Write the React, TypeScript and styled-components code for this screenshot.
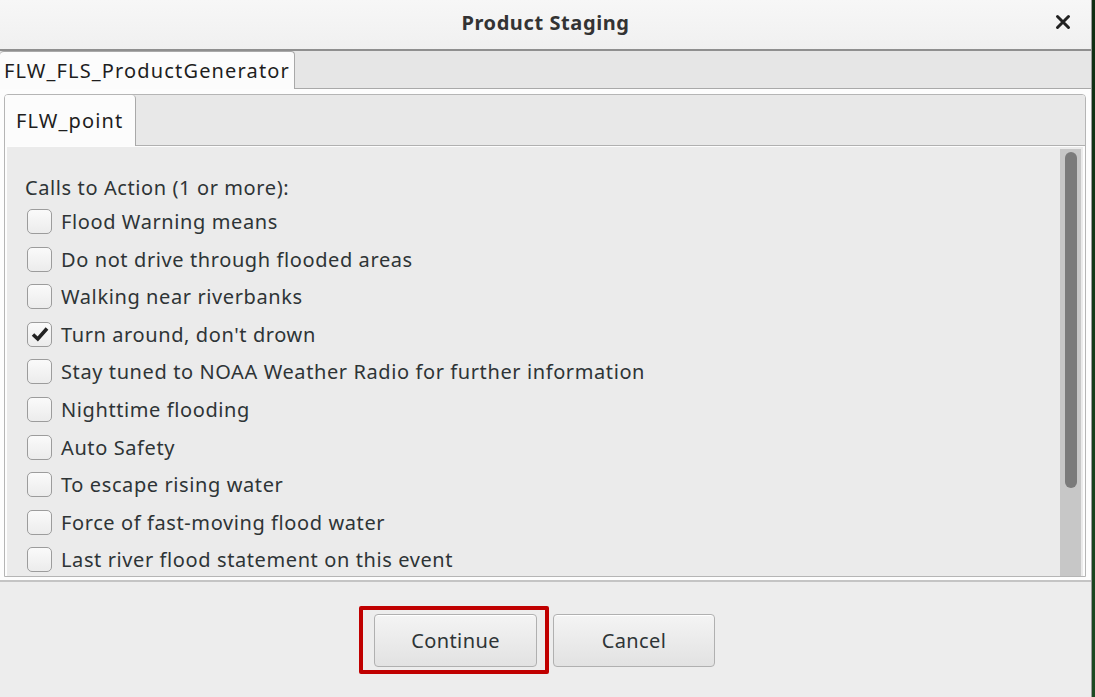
import React from "react";
import styled, { createGlobalStyle } from "styled-components";

const Global = createGlobalStyle`
  html, body { margin: 0; padding: 0; }
  body { width: 1095px; height: 697px; overflow: hidden; background: #17361a; }
  * { box-sizing: border-box; }
`;

const Page = styled.div`
  display: flex;
  width: 1095px;
  height: 697px;
  font-family: "Noto Sans", "Open Sans", sans-serif;
  color: #2e3436;
`;

const Window = styled.div`
  width: 1092px;
  height: 697px;
  display: flex;
  flex-direction: column;
  background: #ededed;
  border-right: 1px solid #9a9a9a;
`;

const Desktop = styled.div`
  flex: 1;
  background: linear-gradient(#0f2d12, #1d4a22);
`;

const TitleBar = styled.div`
  height: 51px;
  flex: none;
  display: flex;
  align-items: center;
  justify-content: center;
  position: relative;
  padding-bottom: 4px;
  background: linear-gradient(#f7f7f7, #f0f0f0);
  border-bottom: 2px solid #8f8f8f;
`;

const Title = styled.div`
  font-weight: 700;
  font-size: 20px;
  letter-spacing: 0.6px;
  color: #333;
  margin-left: 0;
`;

const Close = styled.div`
  position: absolute;
  right: 16px;
  top: 10px;
  width: 24px;
  height: 24px;
  display: flex;
  align-items: center;
  justify-content: center;
`;

const OuterTabs = styled.div`
  height: 38px;
  flex: none;
  display: flex;
  background: #e6e6e6;
  border-bottom: 1px solid #a9a9a9;
`;

const Tab = styled.div<{ $h: number; $w: number }>`
  width: ${(p) => p.$w}px;
  height: ${(p) => p.$h}px;
  background: #fcfcfc;
  border: 1px solid #a9a9a9;
  border-bottom: none;
  border-radius: 4px 4px 0 0;
  display: flex;
  align-items: center;
  font-size: 20px;
  letter-spacing: 1.15px;
  color: #1e1e1e;
  margin-bottom: -1px;
  position: relative;
  z-index: 1;
`;

const OuterTab = styled(Tab)`
  border-left: none;
  padding-left: 4px;
`;

const OuterPage = styled.div`
  flex: none;
  height: 493px;
  background: #fdfdfd;
  padding: 5px 5px 3px 4px;
  border-bottom: 2px solid #c4c4c4;
  display: flex;
  flex-direction: column;
`;

const InnerNotebook = styled.div`
  flex: 1;
  display: flex;
  flex-direction: column;
  border: 1px solid #b5b5b5;
  border-radius: 4px 4px 0 0;
  overflow: hidden;
`;

const InnerTabs = styled.div`
  height: 51px;
  flex: none;
  display: flex;
  background: #e8e8e8;
  border-bottom: 1px solid #b0b0b0;
`;

const InnerTab = styled(Tab)`
  border-top: none;
  border-left: none;
  border-radius: 0 4px 0 0;
  padding-left: 11px;
`;

const Content = styled.div`
  flex: 1;
  display: flex;
  background: #ebebeb;
  border: 2px solid #fdfdfd;
  border-top: 1px solid #fdfdfd;
`;

const List = styled.div`
  flex: 1;
  padding: 24px 0 0 18px;
  display: flex;
  flex-direction: column;
`;

const Header = styled.div`
  font-size: 20px;
  letter-spacing: 0.6px;
  height: 32px;
  line-height: 34px;
  color: #2e3436;
`;

const Row = styled.div`
  display: flex;
  align-items: center;
  height: 37.55px;
  gap: 9px;
  font-size: 20px;
  letter-spacing: 0.6px;
  color: #2e3436;
`;

const Box = styled.div`
  width: 25px;
  height: 25px;
  margin-left: 2px;
  border: 1.5px solid #9c9c9c;
  border-radius: 5px;
  background: linear-gradient(#fafafa, #ececec);
  display: flex;
  align-items: center;
  justify-content: center;
  flex: none;
`;

const Scroll = styled.div`
  width: 21px;
  margin: 2px 2px 0 0;
  background: #c7c7c7;
  padding: 3px 4px 0 5px;
  flex: none;
`;

const Thumb = styled.div`
  height: 336px;
  background: #7b7b7b;
  border-radius: 6px;
`;

const Actions = styled.div`
  flex: 1;
  display: flex;
  justify-content: center;
  padding-top: 32px;
  padding-right: 2px;
  gap: 16px;
  background: #ededed;
`;

const Highlight = styled.div`
  position: relative;
  width: 163px;
  height: 53px;
`;

const Outline = styled.div`
  position: absolute;
  left: -15px;
  top: -8px;
  right: -12px;
  bottom: -7px;
  border: 4px solid #c00000;
  border-radius: 2px;
  pointer-events: none;
`;

const Button = styled.div<{ $w: number }>`
  width: ${(p) => p.$w}px;
  height: 53px;
  border: 1px solid #b0b0b0;
  border-radius: 4px;
  background: linear-gradient(#f4f4f4, #e2e2e2);
  box-shadow: inset 0 1px #fff;
  display: flex;
  align-items: center;
  justify-content: center;
  font-size: 20px;
  letter-spacing: 0.4px;
  color: #2e3436;
`;

const items: [string, boolean][] = [
  ["Flood Warning means", false],
  ["Do not drive through flooded areas", false],
  ["Walking near riverbanks", false],
  ["Turn around, don't drown", true],
  ["Stay tuned to NOAA Weather Radio for further information", false],
  ["Nighttime flooding", false],
  ["Auto Safety", false],
  ["To escape rising water", false],
  ["Force of fast-moving flood water", false],
  ["Last river flood statement on this event", false],
];

export default function App() {
  return (
    <Page>
      <Global />
      <Window>
        <TitleBar>
          <Title>Product Staging</Title>
          <Close>
            <svg width="16" height="16" viewBox="0 0 16 16">
              <path d="M2.5 2.5 L13.5 13.5 M13.5 2.5 L2.5 13.5" stroke="#222" strokeWidth="3" strokeLinecap="round" />
            </svg>
          </Close>
        </TitleBar>
        <OuterTabs>
          <OuterTab $w={295} $h={38}>FLW_FLS_ProductGenerator</OuterTab>
        </OuterTabs>
        <OuterPage>
          <InnerNotebook>
            <InnerTabs>
              <InnerTab $w={131} $h={51}>FLW_point</InnerTab>
            </InnerTabs>
            <Content>
              <List>
                <Header>Calls to Action (1 or more):</Header>
                {items.map(([t, on]) => (
                  <Row key={t}>
                    <Box>
                      {on && (
                        <svg width="18" height="16" viewBox="0 0 18 16">
                          <path d="M2 8.5 L6.8 13 L16 2.5" stroke="#222" strokeWidth="3.6" fill="none" strokeLinejoin="miter" />
                        </svg>
                      )}
                    </Box>
                    <span>{t}</span>
                  </Row>
                ))}
              </List>
              <Scroll>
                <Thumb />
              </Scroll>
            </Content>
          </InnerNotebook>
        </OuterPage>
        <Actions>
          <Highlight>
            <Button $w={163}>Continue</Button>
            <Outline />
          </Highlight>
          <Button $w={162}>Cancel</Button>
        </Actions>
      </Window>
      <Desktop />
    </Page>
  );
}
